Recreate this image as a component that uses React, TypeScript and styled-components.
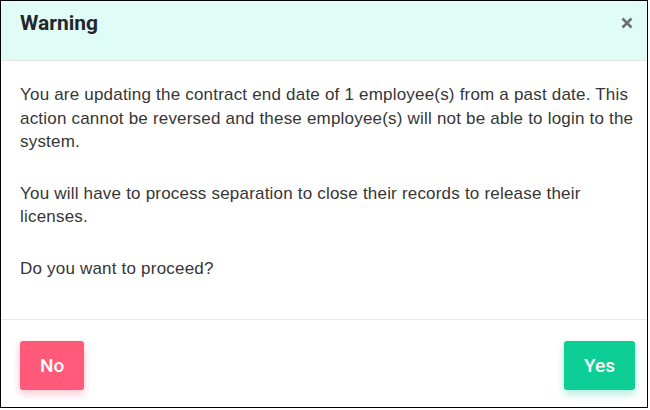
import { createGlobalStyle } from "styled-components";
import styled from "styled-components";

const GlobalStyle = createGlobalStyle`
  html, body {
    margin: 0;
    padding: 0;
    background: #ffffff;
  }
`;

const Modal = styled.div`
  box-sizing: border-box;
  width: 648px;
  height: 408px;
  border: 1px solid #000;
  display: flex;
  flex-direction: column;
  background: #fff;
`;

const Header = styled.div`
  box-sizing: border-box;
  height: 60px;
  flex: none;
  display: flex;
  align-items: center;
  justify-content: space-between;
  padding: 0 12px 15px 19px;
  background: #e0fcf7;
  border-bottom: 1px solid #e2e4e6;
`;

const Title = styled.h5`
  margin: 0;
  font-family: Roboto, "Liberation Sans", sans-serif;
  font-weight: 700;
  font-size: 21px;
  color: #23262b;
`;

const Close = styled.button`
  border: 0;
  background: none;
  padding: 0;
  width: 16px;
  height: 16px;
  display: flex;
  align-items: center;
  justify-content: center;
  cursor: pointer;
`;

const Body = styled.div`
  box-sizing: border-box;
  flex: 1;
  padding: 22px 8px 0 19px;
  border-bottom: 1px solid #e6e8ea;
`;

const Para = styled.p`
  margin: 0 0 28px;
  font-family: "Liberation Sans", Arial, sans-serif;
  font-size: 17px;
  letter-spacing: 0.2px;
  line-height: 23.5px;
  color: #363636;
`;

const Footer = styled.div`
  flex: none;
  height: 87px;
  box-sizing: border-box;
  display: flex;
  justify-content: space-between;
  padding: 21px 12px 0 19px;
`;

const Button = styled.button<{ $tone: "danger" | "success" }>`
  height: 49px;
  padding: 0 20px;
  border: 0;
  border-radius: 3px;
  font-family: Roboto, "Liberation Sans", sans-serif;
  font-size: 19px;
  font-weight: 500;
  color: #fff;
  background: ${(p) => (p.$tone === "danger" ? "#ff5a7a" : "#0dcf95")};
  box-shadow: 0 4px 8px
    ${(p) =>
      p.$tone === "danger" ? "rgba(255, 90, 122, 0.35)" : "rgba(13, 207, 149, 0.35)"};
  cursor: pointer;
`;

export default function App() {
  return (
    <>
      <GlobalStyle />
      <Modal>
        <Header>
          <Title>Warning</Title>
          <Close aria-label="Close">
            <svg width="12" height="12" viewBox="0 0 12 12">
              <path
                d="M1.5 1.5 L10.5 10.5 M10.5 1.5 L1.5 10.5"
                stroke="#6b6f73"
                strokeWidth="2.6"
                strokeLinecap="butt"
              />
            </svg>
          </Close>
        </Header>
        <Body>
          <Para>
            You are updating the contract end date of 1 employee(s) from a past
            date. This action cannot be reversed and these employee(s) will not
            be able to login to the system.
          </Para>
          <Para>
            You will have to process separation to close their records to
            release their licenses.
          </Para>
          <Para>Do you want to proceed?</Para>
        </Body>
        <Footer>
          <Button $tone="danger">No</Button>
          <Button $tone="success">Yes</Button>
        </Footer>
      </Modal>
    </>
  );
}
